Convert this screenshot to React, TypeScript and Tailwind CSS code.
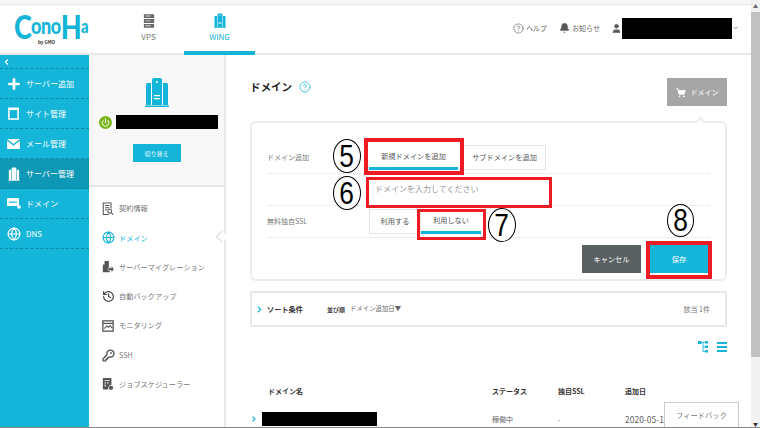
import React from "react";
import { Plus, ShoppingCart, Bell, User, ChevronDown, ChevronLeft, ChevronRight, Globe, KeyRound, History, Power, CircleHelp } from "lucide-react";

const font = { fontFamily: '"Noto Sans CJK JP", "Noto Sans", sans-serif' };

function WingIcon({ className = "", color = "currentColor" }: { className?: string; color?: string }) {
  return (
    <svg viewBox="0 0 24 30" className={className} fill={color}>
      <path d="M7 3a2 2 0 0 1 2-2h6a2 2 0 0 1 2 2v25H7z" />
      <path d="M1 7.500a1.500 1.500 0 0 1 1.500-1.500H6v22H1zM18 6h3.500A1.500 1.500 0 0 1 23 7.500V28h-5z" />
      <path d="M0 28.500h24V30H0z" />
      <circle cx="12" cy="5" r="1" fill="#fff" />
      <path d="M9 18h6v1.200H9zM9 21h6v1.200H9z" fill="#fff" />
    </svg>
  );
}

function ServerIcon({ className = "" }: { className?: string }) {
  return (
    <svg viewBox="0 0 14 16" className={className} fill="#666">
      <rect x="1" y="0" width="12" height="4.500" rx=".5" />
      <rect x="1" y="5.700" width="12" height="4.500" rx=".5" />
      <rect x="1" y="11.400" width="12" height="4.500" rx=".5" />
      <path d="M3 1.700h6v1H3zM3 7.400h6v1H3zM3 13.100h6v1H3z" fill="#ddd" />
    </svg>
  );
}

function Doc() {
  return (
    <svg viewBox="0 0 14 16" className="w-[12px] h-[14px]" fill="none" stroke="#555" strokeWidth="1.200">
      <path d="M8 14.500H1.500V1h9v6.500" />
      <path d="M3.500 4h5M3.500 6.500h5M3.500 9h2.500" />
      <circle cx="9" cy="10.500" r="2.300" />
      <path d="M10.800 12.300l2.200 2.200" />
    </svg>
  );
}
function Migrate() {
  return (
    <svg viewBox="0 0 14 16" className="w-[12px] h-[14px]" fill="#555">
      <path d="M3 1h5v8H9v5H1V5h2z" />
      <path d="M7 9h4V6.500L14 10.500l-3 4V12H7z" stroke="#fff" strokeWidth=".5" />
    </svg>
  );
}
function Monitor() {
  return (
    <svg viewBox="0 0 14 14" className="w-[12px] h-[12px]" fill="none" stroke="#555" strokeWidth="1.500">
      <rect x="1" y="1" width="12" height="12" />
      <path d="M1 4h12" />
      <path d="M2.500 10l3-3 2 1.500 2-2 2.500 3" strokeWidth="1.200" />
    </svg>
  );
}
function Job() {
  return (
    <svg viewBox="0 0 14 16" className="w-[12px] h-[14px]" fill="#555">
      <path d="M1 1h10v8a4 4 0 0 0-3.500 5.500H1z" />
      <path d="M3 3.500h6v1H3zM3 6h1.500v1.500H3zM6 6h1.500v1.500H6zM3 9h1.500v1.500H3z" fill="#fff" />
      <circle cx="10.500" cy="12.500" r="2.500" />
    </svg>
  );
}
function DomainBadge() {
  return (
    <svg viewBox="0 0 14 11" className="w-[14px] h-[11px]" fill="#fff">
      <rect x="0" y="0" width="12" height="8" rx="1" />
      <path d="M2 3.500h8v1.200H2z" fill="#14b5d8" />
      <circle cx="12" cy="9" r="1.800" />
    </svg>
  );
}
function Site() {
  return (
    <svg viewBox="0 0 12 14" className="w-[11px] h-[13px]" fill="none" stroke="#fff">
      <rect x="1" y="1.500" width="10" height="11.500" strokeWidth="1.700" />
      <path d="M0 2h12" strokeWidth="2.500" />
    </svg>
  );
}
function Envelope() {
  return (
    <svg viewBox="0 0 14 11" className="w-[13px] h-[10px]" fill="#fff">
      <path d="M0 0h14L7 5.500z" />
      <path d="M0 1.800l7 5.500 7-5.500V11H0z" />
    </svg>
  );
}
function Tree() {
  return (
    <svg viewBox="0 0 10 12" className="w-[10px] h-[12px]" fill="#14b5d8">
      <rect x="0" y="0" width="3.500" height="3" />
      <rect x="7" y="0" width="3" height="2.500" />
      <rect x="7" y="4.500" width="3" height="2.500" />
      <rect x="7" y="9" width="3" height="2.500" />
      <path d="M3.500 1h3.500v.8H5.400v8.400H7v.8H4.600V2H3.500zM5 5.400h2v.8H5z" />
    </svg>
  );
}
function Ellipse({ n, className }: { n: string; className: string }) {
  return (
    <div className={"absolute flex items-center justify-center rounded-[50%] border border-black bg-white text-black text-[31px] leading-none " + className} style={{ fontFamily: '"Liberation Sans", sans-serif' }}>
      <span className="inline-block scale-x-[0.85]">{n}</span>
    </div>
  );
}

const sideItems: [React.ReactNode, string][] = [
  [<Plus className="w-[16px] h-[16px]" strokeWidth={4} />, "サーバー追加"],
  [<Site />, "サイト管理"],
  [<Envelope />, "メール管理"],
  [<WingIcon className="w-[12px] h-[14px]" color="#fff" />, "サーバー管理"],
  [<DomainBadge />, "ドメイン"],
  [<Globe className="w-[14px] h-[14px]" strokeWidth={2} />, "DNS"],
];

const subItems: [React.ReactNode, string, boolean][] = [
  [<Doc />, "契約情報", false],
  [<Globe className="w-[13px] h-[13px] text-[#14b5d8]" strokeWidth={2} />, "ドメイン", true],
  [<Migrate />, "サーバーマイグレーション", false],
  [<History className="w-[13px] h-[13px] text-[#444]" strokeWidth={2.200} />, "自動バックアップ", false],
  [<Monitor />, "モニタリング", false],
  [<KeyRound className="w-[13px] h-[13px] text-[#555]" strokeWidth={2.500} />, "SSH", false],
  [<Job />, "ジョブスケジューラー", false],
];

export default function App() {
  return (
    <div className="relative w-[760px] h-[428px] overflow-hidden bg-white flex" style={font}>
      <div className="w-[751px] h-full flex flex-col">
        <div className="h-[5px] bg-[#f7f7f7] border-b border-[#e6e6e6]" />
        {/* header */}
        <header className="h-[50px] flex border-b-2 border-[#e8e8e8] relative">
          <div className="w-[89px] h-full pb-[6px] relative flex items-center">
            <div className="ml-[14px] origin-left scale-x-[0.82] text-[#14b5d8] leading-none font-black whitespace-nowrap flex items-center" style={{ fontFamily: '"Lato", sans-serif' }}>
              <span className="text-[33px] tracking-[-1px]">C</span>
              <span className="text-[22px] tracking-[-0.5px]">ono</span>
              <span className="text-[33px] tracking-[-1px]">H</span>
              <span className="text-[18px]">a</span>
            </div>
          </div>
          <span className="absolute left-[38px] top-[35px] text-[4.500px] leading-none text-[#333] font-bold">by GMO</span>
          <nav className="flex ml-[24px]">
            <div className="w-[71px] flex flex-col items-center pt-[9px] text-[#777] text-[8px]">
              <ServerIcon className="w-[12px] h-[14px]" />
              <span className="mt-[3px]">VPS</span>
            </div>
            <div className="w-[71px] flex flex-col items-center pt-[8px] text-[#14b5d8] text-[8px] border-b-4 border-[#14b5d8] h-[50px] -mb-[2px]">
              <WingIcon className="w-[12px] h-[15px]" color="#14b5d8" />
              <span className="mt-[3px]">WING</span>
            </div>
          </nav>
          <div className="ml-auto flex items-center text-[7px] text-[#666] pr-[12px] pb-[2px]">
            <CircleHelp className="w-[11px] h-[11px] mr-[2px]" strokeWidth={1.500} />
            <span>ヘルプ</span>
            <Bell className="w-[11px] h-[12px] ml-[12px] mr-[2px]" fill="#555" />
            <span>お知らせ</span>
            <User className="w-[11px] h-[13px] ml-[11px]" fill="#555" />
            <div className="w-[110px] h-[21px] bg-black" />
            <ChevronDown className="w-[7px] h-[8px]" strokeWidth={2.500} />
          </div>
        </header>
        <div className="flex-1 flex min-h-0">
          {/* sidebar */}
          <aside className="w-[89px] bg-[#14b5d8] text-white text-[8px] shrink-0">
            <div className="h-[14px] flex items-center pl-[2px] border-b border-dashed border-[#0d8aa5]">
              <ChevronLeft className="w-[9px] h-[10px]" strokeWidth={3} />
            </div>
            {sideItems.map(([icon, label], i) => (
              <div key={label} className={"h-[30px] flex items-center border-b border-dashed border-[#0d8aa5] " + (i === 3 ? "bg-[#0f98b6]" : "")}>
                <div className="w-[26px] flex justify-center pl-[1px] shrink-0">{icon}</div>
                <span>{label}</span>
              </div>
            ))}
          </aside>
          {/* sub column */}
          <div className="w-[137px] shrink-0 border-r-2 border-[#e8e8e8] relative">
            <div className="h-[132px] bg-[#f8f8f8] border-b-2 border-[#e6e6e6] flex flex-col items-center pt-[22px]">
              <WingIcon className="w-[24px] h-[30px]" color="#14b5d8" />
              <div className="flex items-center mt-[8px] w-full pl-[10px]">
                <div className="w-[13px] h-[13px] rounded-full bg-[#7ab51d] flex items-center justify-center">
                  <Power className="w-[9px] h-[9px] text-white" strokeWidth={2.500} />
                </div>
                <div className="ml-[4px] w-[102px] h-[14px] bg-black" />
              </div>
              <button className="mt-[15px] w-[48px] h-[18px] bg-[#14b5d8] text-white text-[6px]">切り替え</button>
            </div>
            <div className="pt-[7px]">
              {subItems.map(([icon, label, active]) => (
                <div key={label} className={"h-[29.300px] flex items-center pl-[12px] text-[7.200px] " + (active ? "text-[#14b5d8]" : "text-[#777]")}>
                  <div className="w-[14px] flex justify-center shrink-0">{icon}</div>
                  <span className="ml-[4px] whitespace-nowrap">{label}</span>
                </div>
              ))}
            </div>
            <div className="absolute right-[-2px] top-[177px] w-[9px] h-[9px] rotate-45 bg-white border-l-2 border-b-2 border-[#e8e8e8]" />
          </div>
          {/* main */}
          <main className="flex-1 min-w-0 pl-[24px] pr-[24px] relative">
            <div className="flex items-start justify-between h-[66px] pt-[23px]">
              <div className="flex items-center -mt-[1px] h-[20px]">
                <h1 className="text-[10.500px] font-bold text-[#222]">ドメイン</h1>
                <CircleHelp className="w-[12px] h-[12px] ml-[7px] text-[#14b5d8]" strokeWidth={1.500} />
              </div>
              <button className="w-[60px] h-[28px] bg-[#a6a6a6] text-white text-[7px] flex items-center justify-center gap-[5px]">
                <ShoppingCart className="w-[10px] h-[11px]" fill="#fff" />
                ドメイン
              </button>
            </div>
            {/* form panel */}
            <section className="relative h-[160px] rounded-[6px] border-2 border-[#ececec] px-[15px] pt-[19px]">
              <div className="absolute right-[21px] -top-[5px] w-[7px] h-[7px] rotate-45 bg-white border-l-2 border-t-2 border-[#ececec]" />
              <div className="h-[32px] flex border-b border-dotted border-[#ddd] text-[7px] text-[#777]">
                <div className="w-[102px] flex items-center">ドメイン追加</div>
                <div className="flex h-[25px] mt-[3px] text-[7.200px] text-[#555]">
                  <div className="w-[89px] flex items-center justify-center border-b-[3px] border-[#14b5d8]">新規ドメインを追加</div>
                  <div className="w-[83px] ml-[5px] flex items-center justify-center border border-[#e6e6e6]">サブドメインを追加</div>
                </div>
              </div>
              <div className="h-[32px] flex border-b border-dotted border-[#ddd] text-[8px] text-[#999]">
                <div className="w-[102px]" />
                <div className="flex items-center h-[30px] pl-[6px]">ドメインを入力してください</div>
              </div>
              <div className="h-[32px] flex border-b border-dotted border-[#ddd] text-[7px] text-[#777]">
                <div className="w-[102px] flex items-center">無料独自SSL</div>
                <div className="flex h-[25px] mt-[3px] text-[7.200px] text-[#555]">
                  <div className="w-[52px] flex items-center justify-center border border-[#e6e6e6]">利用する</div>
                  <div className="w-[60px] flex items-center justify-center border-b-[3px] border-[#14b5d8]">利用しない</div>
                </div>
              </div>
              <div className="flex justify-end gap-[9px] pr-[2px] pt-[7px] text-white text-[7.200px]">
                <button className="w-[59px] h-[28px] bg-[#5a6061]">キャンセル</button>
                <button className="w-[58px] h-[28px] bg-[#14b5d8]">保存</button>
              </div>
            </section>
            {/* sort */}
            <section className="mt-[10px] h-[36px] border-2 border-[#e8e8e8] flex items-center pl-[3px] pr-[15px]">
              <ChevronRight className="w-[9px] h-[13px] text-[#14b5d8]" strokeWidth={3.500} />
              <span className="ml-[3px] text-[7.200px] font-bold text-[#333]">ソート条件</span>
              <span className="ml-[24px] text-[6px] font-bold text-[#444]">並び順</span>
              <span className="ml-[5px] text-[6.400px] text-[#666]">ドメイン追加日▼</span>
              <span className="ml-auto text-[7px] text-[#777]">該当 1件</span>
            </section>
            <div className="flex justify-end items-center gap-[9px] h-[12px] mt-[14px]">
              <Tree />
              <div className="w-[10px] h-[10px] flex flex-col justify-between">
                <div className="h-[2px] bg-[#14b5d8]" />
                <div className="h-[2px] bg-[#14b5d8]" />
                <div className="h-[2px] bg-[#14b5d8]" />
              </div>
            </div>
            {/* table */}
            <div className="flex mt-[31px] h-[14px] items-center text-[7px] font-bold text-[#333] whitespace-nowrap">
              <div className="w-[242px] pl-[18px]">ドメイン名</div>
              <div className="w-[66px]">ステータス</div>
              <div className="w-[67px]">独自SSL</div>
              <div>追加日</div>
            </div>
            <div className="flex mt-[14px] h-[14px] items-center text-[7px] text-[#666] whitespace-nowrap">
              <div className="w-[242px] flex items-center">
                <ChevronRight className="w-[8px] h-[10px] text-[#14b5d8]" strokeWidth={3.500} />
                <div className="w-[115px] h-[14px] bg-black ml-[4px]" />
              </div>
              <div className="w-[66px]">稼働中</div>
              <div className="w-[67px]">-</div>
              <div className="text-[8.500px]">2020-05-10</div>
            </div>
          </main>
        </div>
      </div>
      {/* scrollbar */}
      <div className="w-[9px] h-full bg-[#f1f1f1] relative shrink-0">
        <div className="h-[12px] flex items-center justify-center text-[5px] text-[#666]">▲</div>
        <div className="h-[345px] bg-[#c1c1c1]" />
        <div className="absolute bottom-[1px] left-0 right-0 text-center text-[5px] text-[#333]">▼</div>
      </div>
      {/* overlays */}
      <div className="absolute left-[664px] top-[402px] w-[75px] h-[27px] bg-white border border-[#ccc] flex items-center justify-center text-[7.300px] text-[#777]">フィードバック</div>
      <div className="absolute left-0 right-0 bottom-0 h-[1px] bg-[#888]" />

      <div className="absolute left-[364px] top-[138px] w-[100px] h-[37px] border-[4px] border-[#ed1c24]" />
      <div className="absolute left-[366px] top-[177px] w-[186px] h-[31px] border-[3px] border-[#ed1c24]" />
      <div className="absolute left-[417px] top-[209px] w-[69px] h-[31px] border-[3px] border-[#ed1c24]" />
      <div className="absolute left-[646px] top-[241px] w-[66px] h-[38px] border-[4px] border-[#ed1c24]" />
      <Ellipse n="5" className="left-[333px] top-[139px] w-[28px] h-[34px]" />
      <Ellipse n="6" className="left-[333px] top-[176px] w-[28px] h-[34px]" />
      <Ellipse n="7" className="left-[488px] top-[208px] w-[28px] h-[34px]" />
      <Ellipse n="8" className="left-[667px] top-[204px] w-[27px] h-[33px]" />
    </div>
  );
}
